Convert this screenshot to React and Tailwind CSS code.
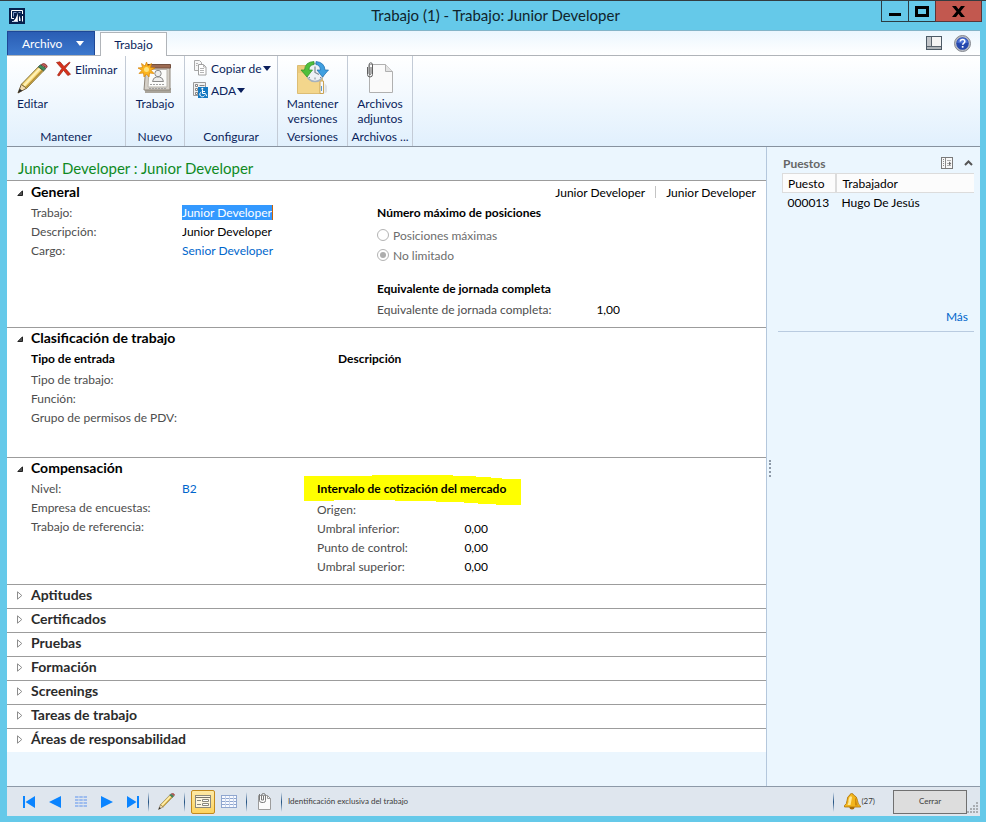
import React from 'react';

const COLLAPSED = [
  'Aptitudes',
  'Certificados',
  'Pruebas',
  'Formación',
  'Screenings',
  'Tareas de trabajo',
  'Áreas de responsabilidad',
];

/* ── Icons ─────────────────────────────────────────────────────────────── */

function AppIcon() {
  return (
    <svg width="16" height="16" viewBox="0 0 16 16" aria-hidden="true">
      <rect width="16" height="16" fill="#06204d" />
      <path d="M5 10.500H2.500v-8h11V6" fill="none" stroke="#fff" />
      <path d="M4.500 8.500v-4h3M9.500 4.500h2" fill="none" stroke="#7f9bc8" />
      <path d="M8.800 4.500v8.500H4.500Q7.500 10.500 8.800 4.500z" fill="#fff" />
      <path d="M10 7.500q1.800 2.500 1.600 5.500H10z" fill="#fff" />
      <path d="M13.500 8v5.500" stroke="#fff" />
      <path d="M3 13.500h6" stroke="#c5d2e8" />
    </svg>
  );
}

function PencilIcon({ size }) {
  return (
    <svg width={size} height={size} viewBox="0 0 32 32" aria-hidden="true">
      <path d="M1 31 4.500 22 10 26z" fill="#f3dcae" stroke="#6b5a3a" strokeWidth="1" />
      <path d="M1 31 2.800 26.500 5.500 28.700z" fill="#2a2a2a" />
      <path d="M4.500 22 22 4l5.500 4L10 26z" fill="#f6d878" stroke="#7d6a2e" strokeWidth="1" />
      <path d="M6.500 22.500 23 5l1.500 1.200L8 24z" fill="#fff2b8" />
      <path d="M9.500 25 26.500 7.200" stroke="#b58f34" strokeWidth="1.500" />
      <path d="m22 4 2.200-2.200 5.600 4L27.500 8z" fill="#3f8f5a" stroke="#3c5a48" strokeWidth="1" />
      <path d="M25.200 1.500Q27.500-.3 29.800 1.500T30.500 5z" fill="#c9605a" stroke="#8a3a35" strokeWidth="1" />
    </svg>
  );
}

function DeleteIcon() {
  return (
    <svg width="16" height="16" viewBox="0 0 16 16" aria-hidden="true">
      <path d="M.5 1.500 4 .8l4 4.700L13.500 1l.5.800L9.300 7.300l5.200 6-2.700 1.200L7.500 9.300 3 15l-1.500-.8L5.800 7.500z" fill="#d8321c" stroke="#9c1f10" strokeWidth=".7" />
    </svg>
  );
}

function NewJobIcon() {
  return (
    <svg width="34" height="34" viewBox="0 0 34 34" aria-hidden="true">
      <path d="M7 27h26v5H7z" fill="#a9a49b" />
      <path d="M8 4h24v25H6z" fill="#d5d0c8" stroke="#8d857a" />
      <path d="M9 3.500h23.500v3.500H9z" fill="#9c6b52" stroke="#74503e" />
      <path d="M11 8.500h18v17.500H10z" fill="#fbfbfa" stroke="#b8b4ad" />
      <circle cx="20" cy="12.500" r="3.200" fill="#ececec" stroke="#8a8a8a" />
      <path d="M14.500 20.500q.5-4 4-4.500h3q3.500.5 4 4.500z" fill="#ececec" stroke="#8a8a8a" />
      <path d="M12 23.500h15M11 27.500h17" stroke="#a0a0a0" strokeDasharray="2 1" />
      <path d="m8.500 1 1.500 4 3.500-2.500-1 4 4.500.5-4 2.300 3 3.200-4.500-.5L11 16l-2.500-3L6 16l-.5-4L1 12.500l3-3.200L0 7l4.500-.5-1-4L7 5z" fill="#fbb41f" stroke="#d98206" strokeWidth=".7" />
      <circle cx="8.500" cy="8.500" r="2.500" fill="#ffe27a" />
    </svg>
  );
}

function CopyIcon() {
  return (
    <svg width="14" height="16" viewBox="0 0 14 16" aria-hidden="true">
      <path d="M1.500.5h5l2 2v8h-7z" fill="#f7f7f7" stroke="#a8a8a8" />
      <path d="M5.500 4.500h5l2.500 2.500v8H5.500z" fill="#fff" stroke="#a0a0a0" />
      <path d="M10.500 4.500V7H13M3 3.500h2M3 5.500h1.500M7 8.500h4M7 10.500h4M7 12.500h4" fill="none" stroke="#b4b4b4" />
    </svg>
  );
}

function AdaIcon() {
  return (
    <svg width="16" height="16" viewBox="0 0 16 16" aria-hidden="true">
      <path d="M.5.5h12v13H.5z" fill="#f1f1f1" stroke="#9a9a9a" />
      <path d="M2.500 2.500h2v2h-2zM2.500 6.500h2v2h-2zM2.500 10.500h2v2h-2z" fill="#fff" stroke="#858585" />
      <path d="M6.500 3.500h5" stroke="#858585" />
      <path d="M5 5h10v11H5z" fill="#1579c2" />
      <circle cx="9.300" cy="6.800" r="1" fill="#fff" />
      <path d="M9.500 8v3.500h3l1.200 2.700M9.500 9.500h2.500M8.300 10a2.500 2.500 0 1 0 3.200 3.500" fill="none" stroke="#fff" />
    </svg>
  );
}

function VersionsIcon() {
  return (
    <svg width="34" height="34" viewBox="0 0 34 34" aria-hidden="true">
      <path d="M1.500 4.500h11l3 3h11v25h-25z" fill="#eccb7c" stroke="#dcbd74" />
      <path d="M2 12h22v20H2z" fill="#f3d68c" />
      <path d="M24 20h3.500v12.500H24z" fill="#f7f9fc" stroke="#c9a354" />
      <path d="M28.500 22l2.500 3v6l-2.500 1.500z" fill="#dde2e7" />
      <path d="M25.500 25v5" stroke="#5b9bd0" />
      <circle cx="19" cy="11.500" r="9" fill="#edf1f5" stroke="#a7b2bc" strokeWidth="1.500" />
      <path d="M19 5.500v6l4 2" fill="none" stroke="#7d8891" strokeWidth="1.200" />
      <path d="M19 16.500v2M14 16l-1 1M24 16l1 1" stroke="#7d8891" />
      <path d="M18 .5Q9 .8 8.500 9H5l6 7 5.500-7H13q0-5 5-5.500z" fill="#4fbf3c" stroke="#2f8f28" strokeWidth=".7" />
      <path d="M20 .5q8.500.8 9 8.500h3.500l-6 7L21 9h3.500q-.5-5-4.500-5.500z" fill="#3f9fe0" stroke="#1e6fae" strokeWidth=".7" />
    </svg>
  );
}

function AttachIcon() {
  return (
    <svg width="28" height="32" viewBox="0 0 28 32" aria-hidden="true">
      <path d="M3.500 2.500h16l7 7v21h-23z" fill="#fafafa" stroke="#b0b0b0" />
      <path d="M19.500 2.500v7h7" fill="#e3e3e3" stroke="#b0b0b0" />
      <path d="M1.500 5v7.500q0 2.500 2.500 2.500t2.500-2.500V3Q6.500.8 4.800.8T3 3v8.500q0 1 1 1t1-1V5" fill="none" stroke="#5f5f5f" />
    </svg>
  );
}

function LayoutIcon() {
  return (
    <svg width="16" height="14" viewBox="0 0 16 14" aria-hidden="true">
      <rect x=".5" y=".5" width="15" height="13" fill="#f4f4f4" stroke="#4c5a66" />
      <rect x="1" y="1" width="4" height="10" fill="#c3c6ca" />
      <path d="M5.500 1v10M1 10.500h14" stroke="#59636d" />
      <path d="M1 11h14v2H1z" fill="#aeb3b8" />
    </svg>
  );
}

function HelpIcon() {
  return (
    <svg width="17" height="17" viewBox="0 0 17 17" aria-hidden="true">
      <circle cx="8.500" cy="8.500" r="8" fill="#b9bcc6" stroke="#85888f" />
      <circle cx="8.500" cy="8.500" r="6.300" fill="#2547ad" />
      <path d="M3 7.500a5.600 5.600 0 0 1 11 0Q8.500 9.500 3 7.500z" fill="#4a6fd3" />
      <path d="M6.300 6.600Q6.300 4.500 8.600 4.500t2.200 2q0 1-1.200 1.800-.9.600-.9 1.500" fill="none" stroke="#fff" strokeWidth="1.600" />
      <path d="M7.800 11h1.700v1.700H7.800z" fill="#fff" />
    </svg>
  );
}

function Caret({ className }) {
  return (
    <svg width="8" height="5" viewBox="0 0 8 5" className={className} aria-hidden="true">
      <path d="M0 0h8L4 5z" fill="currentColor" />
    </svg>
  );
}

function FactBoxIcon() {
  return (
    <svg width="12" height="12" viewBox="0 0 12 12" aria-hidden="true">
      <rect x=".5" y=".5" width="11" height="11" fill="#f8f8f8" stroke="#7a7a7a" />
      <path d="M2.500 2v8" stroke="#8a8a8a" strokeDasharray="1 1" />
      <path d="M4.500 1v10" stroke="#8a8a8a" />
      <path d="M6 3.500h4M6 8.500h4M6 6.500h3" stroke="#b0b0b0" />
      <path d="M8 4.500 10.300 6.500 8 8.500z" fill="#6a6a6a" />
    </svg>
  );
}

function BellIcon() {
  return (
    <svg width="17" height="17" viewBox="0 0 17 17" aria-hidden="true">
      <ellipse cx="8" cy="14.500" rx="2.500" ry="2" fill="#a86b08" />
      <path d="M7.500.5Q9.500.5 9.500 2q3.500 1.200 4 5.500.2 4 3 5.500v1H.5v-1.500Q3 11 3 7.500 3.200 3 6 2 6 .5 7.500.5z" fill="#f2b51c" stroke="#ad7208" strokeWidth=".8" />
      <path d="M5.500 4Q7.500 2.500 8 4.500L6.500 12H3.500Q5 9 4.500 7z" fill="#ffe995" />
      <path d="M11 4.500q1.500 1.500 1.500 4t1.800 4H11z" fill="#cf8a0c" />
    </svg>
  );
}

function FormViewIcon() {
  return (
    <svg width="16" height="13" viewBox="0 0 16 13" aria-hidden="true">
      <rect x=".5" y=".5" width="15" height="12" fill="#fdf6df" stroke="#8a887c" />
      <path d="M1 2.500h14" stroke="#77756a" />
      <path d="M2 5.500h4M2 9.500h4" stroke="#8a887c" />
      <path d="M7.500 4.500h6v2h-6zM7.500 8.500h6v2h-6z" fill="#fff" stroke="#8a887c" />
    </svg>
  );
}

function GridViewIcon() {
  return (
    <svg width="16" height="13" viewBox="0 0 16 13" aria-hidden="true">
      <rect width="16" height="13" fill="#8fa6cf" />
      <path d="M1 1h14v2H1zM1 4h14v2H1zM1 7h14v2H1zM1 10h14v2H1z" fill="#f8faff" />
      <path d="M4.500 1v11M8.500 1v11M12.500 1v11" stroke="#c6d3ea" />
    </svg>
  );
}

function DocumentIcon() {
  return (
    <svg width="14" height="17" viewBox="0 0 14 17" aria-hidden="true">
      <path d="M1.500 2.500h9l3 3v11h-12z" fill="#fbfbfb" stroke="#9c9c9c" />
      <path d="M10.500 2.500v3h3" fill="none" stroke="#9c9c9c" />
      <path d="M2.500 1v6.500q0 2 2.500 2h1.500q2 0 2-2v-5q0-2-2-2t-2 2v4.500h2v-4" fill="none" stroke="#7a7a7a" />
    </svg>
  );
}

/* ── Form pieces ───────────────────────────────────────────────────────── */

function TextField({ id, label, value = '', labelClass = 'w-[151px]', inputClass = '' }) {
  return (
    <div className="flex h-[19px] items-center">
      <label htmlFor={id} className={`shrink-0 whitespace-nowrap text-[#4d4d4d] ${labelClass}`}>{label}</label>
      <input id={id} defaultValue={value} className={`h-[15px] bg-transparent p-0 leading-[15px] outline-none ${inputClass}`} />
    </div>
  );
}

function LinkField({ label, value }) {
  return (
    <div className="flex h-[19px] items-center">
      <span className="w-[151px] shrink-0 text-[#4d4d4d]">{label}</span>
      <a href="#" className="text-[#0066cc]">{value}</a>
    </div>
  );
}

function SubHeading({ children }) {
  return <h3 className="mb-[3px] flex h-[18px] items-center font-bold whitespace-nowrap text-black">{children}</h3>;
}

function Section({ title, summary, className = '', children }) {
  return (
    <section className={`border-t border-[#9c9c9c] bg-white pr-[10px] pl-[10px] ${className}`}>
      <div className="mb-[3px] flex h-[18px] items-center justify-between">
        <h2 className="text-[14px] font-bold text-black">
          <button type="button" className="flex items-center gap-2" aria-expanded="true">
            <svg width="6" height="6" viewBox="0 0 6 6" className="mt-1" aria-hidden="true">
              <path d="M5.500.8v4.700H.8z" fill="#555" stroke="#222" />
            </svg>
            {title}
          </button>
        </h2>
        {summary}
      </div>
      <div className="flex pl-[14px]">{children}</div>
    </section>
  );
}

function CollapsedSection({ title }) {
  return (
    <section className="h-6 border-t border-[#9c9c9c] bg-white pl-[10px]">
      <h2 className="text-[14px] font-bold text-[#2b2b2b]">
        <button type="button" className="flex h-[18px] items-center gap-2" aria-expanded="false">
          <svg width="6" height="9" viewBox="0 0 6 9" className="mt-[2px]" aria-hidden="true">
            <path d="M.5.8v7.400l4.300-3.700z" fill="#fff" stroke="#8c8c8c" />
          </svg>
          {title}
        </button>
      </h2>
    </section>
  );
}

function RibbonGroup({ title, className, children }) {
  return (
    <div className={`flex flex-col justify-between border-r border-[#c3cbd6] ${className}`}>
      <div className="flex">{children}</div>
      <div className="text-center leading-[19px] whitespace-nowrap">{title}</div>
    </div>
  );
}

function LargeButton({ icon, children }) {
  return (
    <button type="button" className="flex w-full flex-col items-center pt-1 leading-[15px]">
      <span className="flex h-9 items-center">{icon}</span>
      {children}
    </button>
  );
}

function FooterDivider() {
  return <span className="h-5 w-px bg-linear-to-b from-[#e0e8f0] via-[#1e5080] to-[#e0e8f0]" />;
}

/* ── Window areas ──────────────────────────────────────────────────────── */

function TitleBar() {
  return (
    <header className="grid h-[30px] grid-cols-[1fr_auto_1fr] border-t border-[#333c40] pr-1 pl-[9px]">
      <div className="flex items-center"><AppIcon /></div>
      <h1 className="self-center text-[15px] text-[#10242c]">Trabajo (1) - Trabajo: Junior Developer</h1>
      <div className="flex items-start justify-end">
        <button type="button" aria-label="Minimizar" className="flex h-[21px] w-7 items-center justify-center border border-t-0 border-[#2b3c43]">
          <svg width="12" height="12" viewBox="0 0 12 12"><path d="M0 8h12v3H0z" /></svg>
        </button>
        <button type="button" aria-label="Maximizar" className="flex h-[21px] w-[26px] items-center justify-center border-b border-[#2b3c43]">
          <svg width="14" height="11" viewBox="0 0 14 11"><path d="M1.500 1.500h11v8h-11z" fill="none" stroke="#000" strokeWidth="3" /></svg>
        </button>
        <button type="button" aria-label="Cerrar ventana" className="flex h-[21px] w-[47px] items-center justify-center border border-t-0 border-[#5b3638] bg-[#c2584f]">
          <svg width="13" height="11" viewBox="0 0 13 11"><path d="M0 0h4l2.500 3.200L9 0h4L8.500 5.500 13 11H9L6.500 7.800 4 11H0l4.500-5.500z" /></svg>
        </button>
      </div>
    </header>
  );
}

function TabStrip() {
  return (
    <nav className="flex h-[26px] items-end border-t border-[#83b4c8] border-b border-b-[#b0b4b9] bg-linear-to-b from-[#ebf6fe] to-white">
      <button type="button" className="flex h-6 w-[88px] items-center border border-b-0 border-[#1d4796] bg-linear-to-b from-[#2a5db4] to-[#3c78cd] pl-[14px] text-white">
        Archivo
        <Caret className="ml-[14px]" />
      </button>
      <button type="button" className="relative top-px ml-[5px] flex h-6 w-[67px] items-center justify-center border border-b-0 border-[#b0b4b9] bg-white">
        Trabajo
      </button>
      <div className="mr-[9px] ml-auto flex h-6 items-center gap-3">
        <button type="button" aria-label="Diseño"><LayoutIcon /></button>
        <button type="button" aria-label="Ayuda"><HelpIcon /></button>
      </div>
    </nav>
  );
}

function Ribbon() {
  return (
    <div className="flex h-[91px] border-b border-[#87929f] bg-linear-to-b from-white to-[#e1f0fd]">
      <RibbonGroup title="Mantener" className="w-[119px]">
        <button type="button" className="flex flex-col items-start pt-1 pl-[10px] leading-[15px]">
          <span className="flex h-9 items-center"><PencilIcon size={31} /></span>
          Editar
        </button>
        <button type="button" className="ml-2 flex h-[26px] items-center gap-[3px]">
          <DeleteIcon />
          Eliminar
        </button>
      </RibbonGroup>
      <RibbonGroup title="Nuevo" className="w-[59px]">
        <LargeButton icon={<NewJobIcon />}>Trabajo</LargeButton>
      </RibbonGroup>
      <RibbonGroup title="Configurar" className="w-[93px]">
        <div className="flex flex-col items-start pt-px pl-2">
          <button type="button" className="flex h-[22px] items-center whitespace-nowrap">
            <span className="w-[18px]"><CopyIcon /></span>
            Copiar de
            <Caret className="ml-px" />
          </button>
          <button type="button" className="flex h-[22px] items-center">
            <span className="w-[18px]"><AdaIcon /></span>
            ADA
            <Caret className="ml-px" />
          </button>
        </div>
      </RibbonGroup>
      <RibbonGroup title="Versiones" className="w-[70px]">
        <LargeButton icon={<VersionsIcon />}>Mantener versiones</LargeButton>
      </RibbonGroup>
      <RibbonGroup title="Archivos ..." className="w-[65px]">
        <LargeButton icon={<AttachIcon />}>Archivos adjuntos</LargeButton>
      </RibbonGroup>
    </div>
  );
}

function GeneralSection() {
  const summary = (
    <div className="flex items-center pt-[2px] text-black">
      <span>Junior Developer</span>
      <span className="mx-[10px] h-3 w-px bg-[#c4c4c4]" />
      <span>Junior Developer</span>
    </div>
  );
  return (
    <Section title="General" summary={summary} className="pt-px pb-2">
      <div className="w-[346px] shrink-0">
        <TextField id="trabajo" label="Trabajo:" value="Junior Developer" inputClass="field-sizing-content border-r border-[#c8640a] bg-[#3399ff]! text-white" />
        <TextField id="descripcion" label="Descripción:" value="Junior Developer" inputClass="text-black" />
        <LinkField label="Cargo:" value="Senior Developer" />
      </div>
      <div>
        <SubHeading>Número máximo de posiciones</SubHeading>
        <fieldset disabled className="pt-px pb-[14px] text-[#6d6d6d]">
          {['Posiciones máximas', 'No limitado'].map((option, i) => (
            <label key={option} className="flex h-5 items-center gap-1">
              <input
                type="radio"
                name="limite"
                defaultChecked={i === 1}
                className="size-3 appearance-none rounded-full border border-[#b3b3b3] bg-white p-[2px] checked:bg-[#adadad] checked:bg-clip-content"
              />
              {option}
            </label>
          ))}
        </fieldset>
        <SubHeading>Equivalente de jornada completa</SubHeading>
        <TextField id="jornada" label="Equivalente de jornada completa:" value="1,00" labelClass="w-[193px]" inputClass="w-[50px] text-right text-black" />
      </div>
    </Section>
  );
}

function ClassificationSection() {
  return (
    <Section title="Clasificación de trabajo" className="pb-[30px]">
      <div className="w-[307px] shrink-0">
        <SubHeading>Tipo de entrada</SubHeading>
        <TextField id="tipo" label="Tipo de trabajo:" />
        <TextField id="funcion" label="Función:" />
        <TextField id="permisos" label="Grupo de permisos de PDV:" />
      </div>
      <SubHeading>Descripción</SubHeading>
    </Section>
  );
}

function CompensationSection() {
  return (
    <Section title="Compensación" className="pb-2">
      <div className="w-[286px] shrink-0">
        <LinkField label="Nivel:" value="B2" />
        <TextField id="encuestas" label="Empresa de encuestas:" inputClass="w-[120px]" />
        <TextField id="referencia" label="Trabajo de referencia:" inputClass="w-[120px]" />
      </div>
      <div>
        <div className="relative">
          {/* Marker stroke under the heading */}
          <svg className="absolute -top-1 -left-[13px]" width="217" height="30" viewBox="0 0 217 30" aria-hidden="true">
            <path d="M0 1h68V0h81v1h23v1h15v1h11v1h19v26h-25v-1h-18v-1h-14v-1h-28v-1H91v-1H30v1H0z" fill="#ff0" />
          </svg>
          <div className="relative"><SubHeading>Intervalo de cotización del mercado</SubHeading></div>
        </div>
        <TextField id="origen" label="Origen:" labelClass="w-[121px]" inputClass="w-[50px]" />
        <TextField id="inferior" label="Umbral inferior:" value="0,00" labelClass="w-[121px]" inputClass="w-[50px] text-right text-black" />
        <TextField id="control" label="Punto de control:" value="0,00" labelClass="w-[121px]" inputClass="w-[50px] text-right text-black" />
        <TextField id="superior" label="Umbral superior:" value="0,00" labelClass="w-[121px]" inputClass="w-[50px] text-right text-black" />
      </div>
    </Section>
  );
}

function FactBox() {
  return (
    <aside className="relative w-[214px] shrink-0 border-l border-[#b4c7dc] pr-[6px] pl-[11px]">
      <span className="absolute top-[313px] left-[2px] h-[17px] border-l-2 border-dotted border-[#8e9aa8]" />
      <div className="flex h-[26px] items-center pt-[6px] pr-px pl-[5px]">
        <h2 className="mr-auto font-bold text-[#666]">Puestos</h2>
        <button type="button" aria-label="Opciones"><FactBoxIcon /></button>
        <button type="button" aria-label="Contraer" className="ml-[11px]">
          <svg width="9" height="6" viewBox="0 0 9 6"><path d="M1 5 4.500 1.500 8 5" fill="none" stroke="#555" strokeWidth="2" /></svg>
        </button>
      </div>
      <div className="h-[159px] border-b border-[#b9cbe0]">
        <table className="ml-1 w-[calc(100%-4px)] border-collapse text-left">
          <thead>
            <tr className="h-[19px] border border-r-0 border-[#dcdcdc] bg-[#fcfcfc]">
              <th className="w-[53px] border-r-2 border-[#dcdcdc] p-0 pl-[5px] leading-[17px] font-normal">Puesto</th>
              <th className="p-0 pl-[6px] leading-[17px] font-normal">Trabajador</th>
            </tr>
          </thead>
          <tbody>
            <tr className="h-[19px]">
              <td className="p-0 pl-[5px]">000013</td>
              <td className="p-0 pl-[6px]">Hugo De Jesús</td>
            </tr>
          </tbody>
        </table>
        <div className="pt-[97px] pr-[6px] text-right">
          <a href="#" className="text-[#0066cc]">Más</a>
        </div>
      </div>
    </aside>
  );
}

function StatusBar() {
  return (
    <footer className="flex h-[30px] items-center border-t border-[#8d99a8] bg-[#dfe6ee] text-[8px] text-[#3c3c3c]">
      <div className="flex items-center gap-[14px] pl-4 text-[#0a84ff]">
        <button type="button" aria-label="Primero">
          <svg width="12" height="12" viewBox="0 0 12 12"><path d="M0 0h2v12H0zM12 0v12L2.500 6z" fill="currentColor" /></svg>
        </button>
        <button type="button" aria-label="Anterior">
          <svg width="12" height="12" viewBox="0 0 12 12"><path d="M12 0v12L0 6z" fill="currentColor" /></svg>
        </button>
        <button type="button" aria-label="Cuadrícula">
          <svg width="12" height="12" viewBox="0 0 12 12"><path d="M0 1h12M0 4h12M0 7h12M0 10h12" stroke="#9dbcee" strokeWidth="2" strokeDasharray="3.500 .75" /></svg>
        </button>
        <button type="button" aria-label="Siguiente">
          <svg width="12" height="12" viewBox="0 0 12 12"><path d="M0 0v12l12-6z" fill="currentColor" /></svg>
        </button>
        <button type="button" aria-label="Último">
          <svg width="12" height="12" viewBox="0 0 12 12"><path d="M10 0h2v12h-2zM0 0v12l9.500-6z" fill="currentColor" /></svg>
        </button>
      </div>
      <div className="ml-[9px] flex items-center">
        <FooterDivider />
        <button type="button" aria-label="Editar registro" className="mx-[9px]"><PencilIcon size={17} /></button>
        <FooterDivider />
        <button type="button" aria-label="Vista de formulario" className="ml-[6px] flex size-6 items-center justify-center rounded-xs border border-[#c28a1e] bg-linear-to-b from-[#fde9a4] to-[#fdd35c]">
          <FormViewIcon />
        </button>
        <button type="button" aria-label="Vista de cuadrícula" className="mr-[9px] ml-[6px]"><GridViewIcon /></button>
        <FooterDivider />
        <button type="button" aria-label="Documentos" className="mx-[10px]"><DocumentIcon /></button>
        <FooterDivider />
        <span className="ml-[6px]">Identificación exclusiva del trabajo</span>
      </div>
      <div className="ml-auto flex items-center">
        <FooterDivider />
        <button type="button" className="ml-[10px] flex items-center"><BellIcon />(27)</button>
        <button type="button" className="ml-[18px] h-6 w-[74px] border border-[#707070] bg-[#dddddd]">Cerrar</button>
        <svg width="13" height="13" viewBox="0 0 13 13" className="self-end" aria-hidden="true">
          <path d="M9 1h2v2H9zM9 4h2v2H9zM6 4h2v2H6zM9 7h2v2H9zM6 7h2v2H6zM3 7h2v2H3zM9 10h2v2H9zM6 10h2v2H6zM3 10h2v2H3zM0 10h2v2H0z" fill="#a9adb2" />
        </svg>
      </div>
    </footer>
  );
}

export default function App() {
  return (
    <div className="flex min-h-screen flex-col bg-[#65c9e9] pb-[6px] font-['Lato','Open_Sans',sans-serif] text-[12px] leading-[15px] text-black">
      <TitleBar />
      <div className="mr-[6px] ml-[7px] flex flex-1 flex-col bg-[#ebf6fe]">
        <div className="text-[#0b1f5c]">
          <TabStrip />
          <Ribbon />
        </div>
        <main className="flex flex-1">
          <div className="min-w-0 flex-1">
            <div className="flex h-[33px] items-end pb-[2px] pl-[11px] text-[15px] leading-5 text-[#0f8a1f]">
              Junior Developer : Junior Developer
            </div>
            <GeneralSection />
            <ClassificationSection />
            <CompensationSection />
            {COLLAPSED.map((title) => <CollapsedSection key={title} title={title} />)}
          </div>
          <FactBox />
        </main>
        <StatusBar />
      </div>
    </div>
  );
}
